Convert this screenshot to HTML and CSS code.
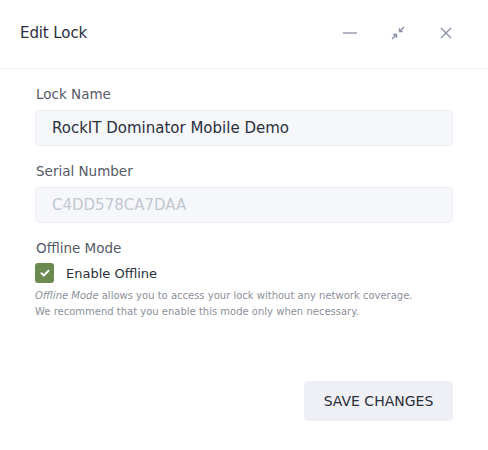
FILE: index.html
```html
<!DOCTYPE html>
<html>
<head>
<meta charset="utf-8">
<link rel="stylesheet" href="styles.css">
</head>
<body>
<div class="dialog">
  <header class="header">
    <h1 class="title">Edit Lock</h1>
    <div class="actions">
      <button class="icon-btn" aria-label="Minimize">
        <svg width="16" height="16" viewBox="0 0 16 16"><path d="M1 8h14" stroke="#8a8fa3" stroke-width="1.3" fill="none"/></svg>
      </button>
      <button class="icon-btn" aria-label="Restore">
        <svg width="16" height="16" viewBox="0 0 16 16" fill="none" stroke="#8a8fa3" stroke-width="1.4">
          <path d="M14 2L9.5 6.5M9.5 3.2v3.3h3.3"/>
          <path d="M2 14l4.5-4.5M3.2 9.5h3.3v3.3"/>
        </svg>
      </button>
      <button class="icon-btn" aria-label="Close">
        <svg width="16" height="16" viewBox="0 0 16 16"><path d="M3 3l10 10M13 3L3 13" stroke="#8a8fa3" stroke-width="1.3" fill="none"/></svg>
      </button>
    </div>
  </header>
  <main class="body">
    <div class="field">
      <label class="label">Lock Name</label>
      <div class="input">RockIT Dominator Mobile Demo</div>
    </div>
    <div class="field">
      <label class="label">Serial Number</label>
      <div class="input disabled">C4DD578CA7DAA</div>
    </div>
    <div class="field">
      <label class="label">Offline Mode</label>
      <div class="check-row">
        <span class="checkbox">
          <svg width="12" height="12" viewBox="0 0 12 12"><path d="M2.5 6.2l2.3 2.3 4.7-4.8" stroke="#fff" stroke-width="2" fill="none" stroke-linecap="round" stroke-linejoin="round"/></svg>
        </span>
        <span class="check-label">Enable Offline</span>
      </div>
      <p class="help"><em>Offline Mode</em> allows you to access your lock without any network coverage.<br>We recommend that you enable this mode only when necessary.</p>
    </div>
    <div class="footer">
      <button class="save">SAVE CHANGES</button>
    </div>
  </main>
</div>
</body>
</html>
```
FILE: styles.css
```css
* { box-sizing: border-box; }
html, body { margin: 0; padding: 0; background: #fff; }
body { font-family: "DejaVu Sans", "Noto Sans", sans-serif; color: #2b2f3a; }
.dialog { width: 488px; height: 450px; background: #fff; }
.header {
  height: 69px;
  display: flex;
  align-items: center;
  justify-content: space-between;
  padding: 0 34px 2px 20px;
  border-bottom: 1px solid #f0f1f4;
}
.title { margin: 0; font-size: 15px; font-weight: 400; color: #2b2f3a; letter-spacing: -0.1px; }
.actions { display: flex; gap: 32px; }
.icon-btn { width: 16px; height: 16px; padding: 0; border: 0; background: none; display: flex; }
.body { padding: 17px 35px 0 35px; }
.field { display: flex; flex-direction: column; margin-bottom: 17px; }
.label { font-size: 13.5px; color: #555a66; margin: 0 0 7px 1px; line-height: 17px; }
.input {
  height: 36px;
  background: #f5f7fb;
  border: 1px solid #eceef3;
  border-radius: 4px;
  padding: 0 16px;
  display: flex;
  align-items: center;
  font-size: 15px;
  color: #2b2f3a;
}
.input.disabled { color: #c3c7d1; }
.check-row { display: flex; align-items: center; gap: 12px; margin-top: -1px; }
.checkbox {
  width: 19px; height: 20px;
  background: #6b8a4f;
  border-radius: 3px;
  display: flex; align-items: center; justify-content: center;
}
.check-label { font-size: 13px; color: #2b2f3a; font-weight: 500; }
.help { margin: 5px 0 0 0; font-size: 10px; line-height: 16px; color: #8c909a; white-space: nowrap; }
.help em { font-style: italic; }
.footer { display: flex; justify-content: flex-end; margin-top: 61px; }
.save {
  width: 149px; height: 40px;
  background: #eef0f6;
  border: 0; border-radius: 4px;
  font-family: inherit;
  font-size: 14px;
  color: #2b2f3a;
}
```
